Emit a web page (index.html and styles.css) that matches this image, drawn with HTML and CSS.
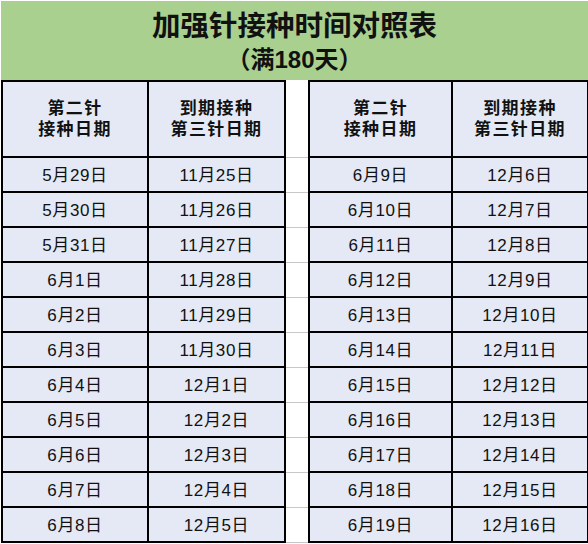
FILE: index.html
```html
<!DOCTYPE html>
<html lang="zh-CN">
<head>
<meta charset="utf-8">
<title>加强针接种时间对照表</title>
<link rel="stylesheet" href="styles.css">
</head>
<body>
<div class="sheet">
  <div class="banner">
    <div class="title">加强针接种时间对照表</div>
    <div class="subtitle">（满180天）</div>
  </div>
  <table class="grid">
    <colgroup>
      <col class="c1"><col class="c2"><col class="cg"><col class="c3"><col class="c4">
    </colgroup>
    <thead>
      <tr class="head">
        <th>第二针<br>接种日期</th>
        <th>到期接种<br>第三针日期</th>
        <td class="gap"></td>
        <th>第二针<br>接种日期</th>
        <th>到期接种<br>第三针日期</th>
      </tr>
    </thead>
    <tbody>
      <tr><td>5月29日</td><td>11月25日</td><td class="gap"></td><td>6月9日</td><td>12月6日</td></tr>
      <tr><td>5月30日</td><td>11月26日</td><td class="gap"></td><td>6月10日</td><td>12月7日</td></tr>
      <tr><td>5月31日</td><td>11月27日</td><td class="gap"></td><td>6月11日</td><td>12月8日</td></tr>
      <tr><td>6月1日</td><td>11月28日</td><td class="gap"></td><td>6月12日</td><td>12月9日</td></tr>
      <tr><td>6月2日</td><td>11月29日</td><td class="gap"></td><td>6月13日</td><td>12月10日</td></tr>
      <tr><td>6月3日</td><td>11月30日</td><td class="gap"></td><td>6月14日</td><td>12月11日</td></tr>
      <tr><td>6月4日</td><td>12月1日</td><td class="gap"></td><td>6月15日</td><td>12月12日</td></tr>
      <tr><td>6月5日</td><td>12月2日</td><td class="gap"></td><td>6月16日</td><td>12月13日</td></tr>
      <tr><td>6月6日</td><td>12月3日</td><td class="gap"></td><td>6月17日</td><td>12月14日</td></tr>
      <tr><td>6月7日</td><td>12月4日</td><td class="gap"></td><td>6月18日</td><td>12月15日</td></tr>
      <tr><td>6月8日</td><td>12月5日</td><td class="gap"></td><td>6月19日</td><td>12月16日</td></tr>
    </tbody>
  </table>
</div>
</body>
</html>
```
FILE: styles.css
```css
html, body {
  margin: 0;
  padding: 0;
  background: #ffffff;
}

.sheet {
  width: 588px;
  height: 544px;
  padding: 1px 0 0 1px;
  box-sizing: border-box;
  overflow: hidden;
  font-family: "Liberation Sans", "Noto Sans CJK SC", sans-serif;
  color: #111111;
}

.banner {
  height: 79px;
  box-sizing: border-box;
  padding-top: 8px;
  background: #a9d08e;
  text-align: center;
}

.title {
  font-size: 28.5px;
  line-height: 34px;
  font-weight: 700;
}

.subtitle {
  margin-top: 3px;
  font-size: 24px;
  line-height: 28px;
  font-weight: 700;
}

.grid {
  border-collapse: collapse;
  table-layout: fixed;
  width: 586px;
  margin: 0;
}

.c1 { width: 146px; }
.c2 { width: 137px; }
.cg { width: 24px; }
.c3 { width: 143px; }
.c4 { width: 136px; }

.grid th,
.grid td {
  border: 2px solid #000000;
  background: #e4e9f5;
  text-align: center;
  padding: 0;
}

.grid th {
  font-size: 17px;
  line-height: 21px;
  font-weight: 700;
  letter-spacing: 1.4px;
}

.grid td {
  font-size: 17px;
  line-height: 20px;
  letter-spacing: 0.6px;
}

.head th,
.head td {
  height: 74px;
}

.grid tbody td {
  height: 35px;
  padding-top: 3px;
  box-sizing: border-box;
}

.grid td.gap {
  background: #ffffff;
  border-left: none;
  border-right: none;
  border-top: 1px solid #c8c8c8;
  border-bottom: 1px solid #c8c8c8;
}

.grid .head td.gap {
  border-top: none;
}
```
